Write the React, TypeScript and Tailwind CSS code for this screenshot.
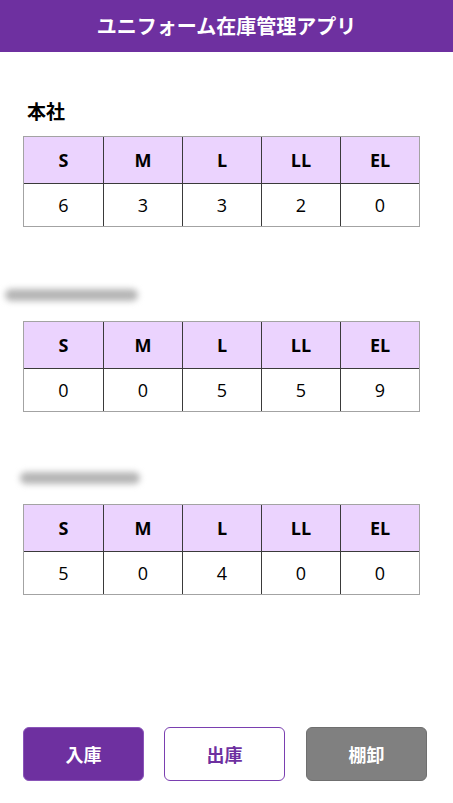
const sections = [
  { name: '本社', blurred: false, values: [6, 3, 3, 2, 0], mt: 'mt-[45px]' },
  { name: '', blurred: true, values: [0, 0, 5, 5, 9], blurClass: 'ml-[5px] w-[133px]', mt: 'mt-[54px]' },
  { name: '', blurred: true, values: [5, 0, 4, 0, 0], blurClass: 'ml-[20px] w-[120px]', mt: 'mt-[52px]' },
];

const sizes = ['S', 'M', 'L', 'LL', 'EL'];

function StockTable({ values }: { values: number[] }) {
  return (
    <div className="ml-[23px] w-[397px] border border-[#a3a3a3]">
      <div className="grid grid-cols-5 bg-[#ebd3fe]">
        {sizes.map((s, i) => (
          <div
            key={s}
            className={`h-[46px] flex items-center justify-center text-[18px] font-bold text-black ${i > 0 ? 'border-l border-[#3a3a3a]' : ''}`}
          >
            {s}
          </div>
        ))}
      </div>
      <div className="grid grid-cols-5 border-t border-[#3a3a3a] bg-white">
        {values.map((v, i) => (
          <div
            key={i}
            className={`h-[42px] flex items-center justify-center text-[18px] text-black ${i > 0 ? 'border-l border-[#3a3a3a]' : ''}`}
          >
            {v}
          </div>
        ))}
      </div>
    </div>
  );
}

export default function App() {
  return (
    <div
      className="min-h-screen flex flex-col bg-white"
      style={{ fontFamily: '"Open Sans", "Noto Sans CJK JP", sans-serif' }}
    >
      <header className="h-[52px] bg-[#6e30a0] flex items-center justify-center">
        <h1
          className="text-white text-[20px] font-bold"
          style={{ fontFamily: '"Noto Sans CJK JP", sans-serif' }}
        >
          ユニフォーム在庫管理アプリ
        </h1>
      </header>

      <main className="flex flex-col">
        {sections.map((sec, idx) => (
          <section key={idx} className={sec.mt}>
            {sec.blurred ? (
              <div className="h-[28px] mb-[12px] flex items-center">
                <div className={`${sec.blurClass} h-[12px] rounded-full bg-[#b5b5b5] blur-[3px]`} />
              </div>
            ) : (
              <div
                className="h-[28px] mb-[11px] ml-[27px] flex items-center text-[19px] font-bold text-black"
                style={{ fontFamily: '"Noto Sans CJK JP", sans-serif' }}
              >
                {sec.name}
              </div>
            )}
            <StockTable values={sec.values} />
          </section>
        ))}
      </main>

      <div
        className="mt-auto flex gap-[20px] pl-[23px] pb-[22px]"
        style={{ fontFamily: '"Noto Sans CJK JP", sans-serif' }}
      >
        <button className="w-[121px] h-[54px] rounded-[6px] bg-[#6e30a0] border border-[#8a55b8] text-white text-[18px] font-bold">
          入庫
        </button>
        <button className="w-[121px] h-[54px] rounded-[6px] bg-white border border-[#7a3fb0] text-[#6e30a0] text-[18px] font-bold">
          出庫
        </button>
        <button className="w-[121px] h-[54px] rounded-[6px] bg-[#808080] border border-[#6f6f6f] text-white text-[18px] font-bold ml-px">
          棚卸
        </button>
      </div>
    </div>
  );
}
